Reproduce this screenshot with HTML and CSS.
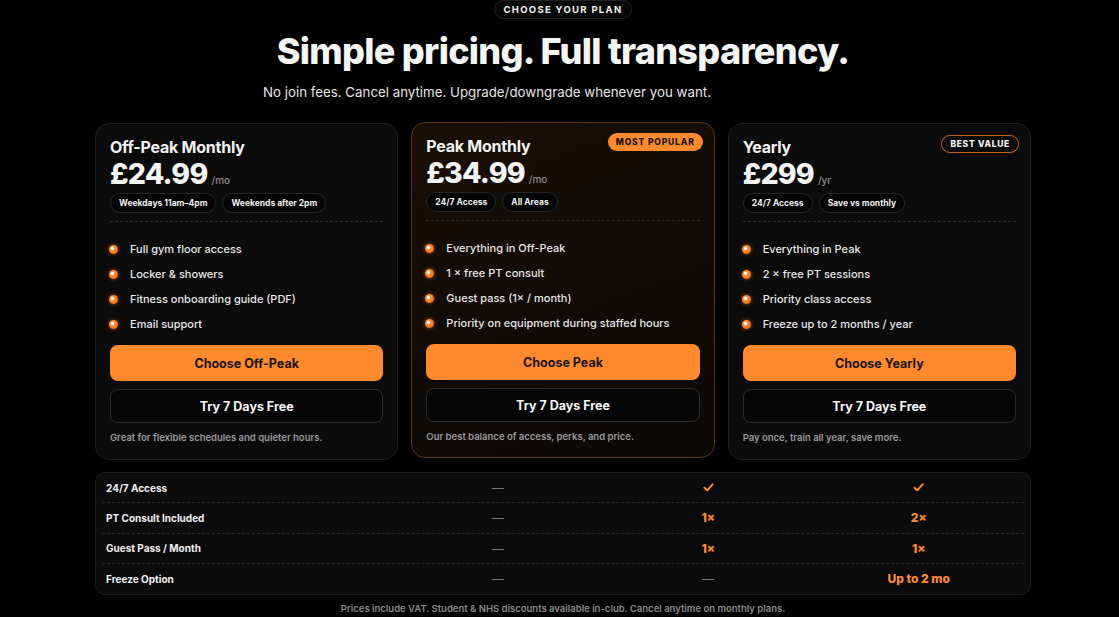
FILE: index.html
```html
<!DOCTYPE html>
<html lang="en">
<head>
<meta charset="utf-8">
<title>Pricing</title>
<link rel="stylesheet" href="styles.css">
</head>
<body>
<div class="shell">
  <main class="page">
    <header class="hero">
      <span class="eyebrow">CHOOSE YOUR PLAN</span>
      <h1 class="headline">Simple pricing. Full transparency.</h1>
      <p class="lede">No join fees. Cancel anytime. Upgrade/downgrade whenever you want.</p>
    </header>

    <section class="plans">
      <article class="plan">
        <h2 class="plan-name">Off-Peak Monthly</h2>
        <div class="price"><span class="amount">£24.99</span><span class="per">/mo</span></div>
        <div class="chips"><span class="chip">Weekdays 11am–4pm</span><span class="chip">Weekends after 2pm</span></div>
        <hr class="divider">
        <ul class="features">
          <li><span class="dot"></span>Full gym floor access</li>
          <li><span class="dot"></span>Locker &amp; showers</li>
          <li><span class="dot"></span>Fitness onboarding guide (PDF)</li>
          <li><span class="dot"></span>Email support</li>
        </ul>
        <button class="btn btn-primary">Choose Off-Peak</button>
        <button class="btn btn-ghost">Try 7 Days Free</button>
        <p class="note">Great for flexible schedules and quieter hours.</p>
      </article>

      <article class="plan plan-popular">
        <span class="badge badge-solid">MOST POPULAR</span>
        <h2 class="plan-name">Peak Monthly</h2>
        <div class="price"><span class="amount">£34.99</span><span class="per">/mo</span></div>
        <div class="chips"><span class="chip">24/7 Access</span><span class="chip">All Areas</span></div>
        <hr class="divider">
        <ul class="features">
          <li><span class="dot"></span>Everything in Off-Peak</li>
          <li><span class="dot"></span>1 × free PT consult</li>
          <li><span class="dot"></span>Guest pass (1× / month)</li>
          <li><span class="dot"></span>Priority on equipment during staffed hours</li>
        </ul>
        <button class="btn btn-primary">Choose Peak</button>
        <button class="btn btn-ghost">Try 7 Days Free</button>
        <p class="note">Our best balance of access, perks, and price.</p>
      </article>

      <article class="plan">
        <span class="badge badge-outline">BEST VALUE</span>
        <h2 class="plan-name">Yearly</h2>
        <div class="price"><span class="amount">£299</span><span class="per">/yr</span></div>
        <div class="chips"><span class="chip">24/7 Access</span><span class="chip">Save vs monthly</span></div>
        <hr class="divider">
        <ul class="features">
          <li><span class="dot"></span>Everything in Peak</li>
          <li><span class="dot"></span>2 × free PT sessions</li>
          <li><span class="dot"></span>Priority class access</li>
          <li><span class="dot"></span>Freeze up to 2 months / year</li>
        </ul>
        <button class="btn btn-primary">Choose Yearly</button>
        <button class="btn btn-ghost">Try 7 Days Free</button>
        <p class="note">Pay once, train all year, save more.</p>
      </article>
    </section>

    <section class="compare">
      <div class="row">
        <span class="label">24/7 Access</span>
        <span class="val muted">—</span>
        <span class="val"><svg class="check" viewBox="0 0 12 10" width="11" height="9"><path d="M1.5 5.2 L4.6 8.2 L10.5 1.5" fill="none" stroke="#ff8a2e" stroke-width="2.2" stroke-linecap="round" stroke-linejoin="round"/></svg></span>
        <span class="val"><svg class="check" viewBox="0 0 12 10" width="11" height="9"><path d="M1.5 5.2 L4.6 8.2 L10.5 1.5" fill="none" stroke="#ff8a2e" stroke-width="2.2" stroke-linecap="round" stroke-linejoin="round"/></svg></span>
      </div>
      <div class="row">
        <span class="label">PT Consult Included</span>
        <span class="val muted">—</span>
        <span class="val hot">1×</span>
        <span class="val hot">2×</span>
      </div>
      <div class="row">
        <span class="label">Guest Pass / Month</span>
        <span class="val muted">—</span>
        <span class="val hot">1×</span>
        <span class="val hot">1×</span>
      </div>
      <div class="row">
        <span class="label">Freeze Option</span>
        <span class="val muted">—</span>
        <span class="val muted">—</span>
        <span class="val hot">Up to 2 mo</span>
      </div>
    </section>

    <p class="fineprint">Prices include VAT. Student &amp; NHS discounts available in-club. Cancel anytime on monthly plans.</p>
  </main>
</div>
</body>
</html>
```

FILE: styles.css
```css
* { box-sizing: border-box; }

html, body {
  margin: 0;
  padding: 0;
  background: #000;
  color: #f2f2f2;
  font-family: Inter, "Noto Sans", "Liberation Sans", sans-serif;
}

.shell {
  padding-left: 7px;
}

.page {
  width: 936px;
  margin: 0 auto;
}

.hero {
  display: flex;
  flex-direction: column;
  align-items: center;
}

.eyebrow {
  display: inline-flex;
  align-items: center;
  height: 19px;
  padding: 0 9px;
  border: 1px solid #222;
  border-radius: 999px;
  background: #070707;
  font-size: 9.5px;
  font-weight: 700;
  letter-spacing: 1.3px;
  color: #f2f2f2;
}

.headline {
  margin: 12px 0 0;
  font-size: 36px;
  line-height: 40px;
  font-weight: 800;
  letter-spacing: -0.7px;
  color: #f5f5f5;
}

.lede {
  width: 600px;
  margin: 12px 0 0;
  font-size: 13.3px;
  line-height: 18px;
  color: #e6e6e6;
  text-align: left;
}

.plans {
  display: grid;
  grid-template-columns: repeat(3, 1fr);
  gap: 13px;
  margin-top: 22px;
}

.plan {
  position: relative;
  display: flex;
  flex-direction: column;
  padding: 13px 14px 14px;
  border: 1px solid #1e1e1e;
  border-radius: 14px;
  background: #0b0b0b;
}

.plan-popular {
  border-color: #5e3312;
  background: linear-gradient(160deg, #1a0f07 0%, #120b06 45%, #0c0806 100%);
  margin-top: -1px;
  margin-bottom: 2px;
}

.badge {
  position: absolute;
  top: 10px;
  right: 11px;
  display: inline-flex;
  align-items: center;
  height: 18px;
  padding: 0 8px;
  border-radius: 999px;
  font-size: 8.5px;
  font-weight: 800;
  letter-spacing: 0.85px;
}

.badge-solid {
  background: #ff8a2e;
  color: #1a1005;
}

.badge-outline {
  top: 11px;
  border: 1.5px solid #c9641c;
  color: #f5f5f5;
  background: #0b0b0b;
  letter-spacing: 0.7px;
}

.plan-name {
  margin: 0;
  font-size: 16px;
  line-height: 20px;
  font-weight: 700;
  letter-spacing: -0.25px;
  color: #f2f2f2;
}

.price {
  display: flex;
  align-items: baseline;
  gap: 4px;
  margin-top: 1px;
}

.amount {
  font-size: 28.5px;
  line-height: 32px;
  font-weight: 800;
  letter-spacing: -0.8px;
  color: #f4f4f4;
}

.per {
  font-size: 10px;
  color: #8c8c8c;
  font-weight: 500;
}

.chips {
  display: flex;
  gap: 6px;
  margin-top: 3px;
}

.chip {
  display: inline-flex;
  align-items: center;
  height: 20px;
  padding: 0 8px;
  border: 1px solid #262626;
  border-radius: 999px;
  background: #050505;
  font-size: 8.5px;
  font-weight: 700;
  color: #f0f0f0;
}

.divider {
  width: 100%;
  margin: 8px 0 0;
  border: 0;
  border-top: 1px dashed #2a2a2a;
}

.features {
  list-style: none;
  margin: 18px 0 0;
  padding: 0;
  display: flex;
  flex-direction: column;
  gap: 7px;
}

.features li {
  display: flex;
  align-items: center;
  gap: 12px;
  height: 18px;
  font-size: 11px;
  font-weight: 500;
  color: #e8e8e8;
}

.dot {
  flex: none;
  width: 9px;
  height: 9px;
  margin-left: -1px;
  border-radius: 50%;
  background: radial-gradient(circle at 38% 38%, #ffffff 0, #ffffff 1.2px, #ff8f33 2.2px, #f07316 70%, #c9560c 100%);
  box-shadow: 0 0 4px rgba(255, 120, 30, 0.55);
}

.btn {
  display: flex;
  align-items: center;
  justify-content: center;
  width: 100%;
  border-radius: 8px;
  font-family: inherit;
  font-weight: 700;
  cursor: pointer;
}

.btn-primary {
  height: 36px;
  margin-top: 12px;
  border: 0;
  background: #ff8a2e;
  color: #1c1208;
  font-size: 12.5px;
}

.btn-ghost {
  height: 34px;
  margin-top: 8px;
  border: 1px solid #2c2c2c;
  background: #050505;
  color: #f5f5f5;
  font-size: 12.5px;
}

.note {
  margin: 9px 0 0;
  font-size: 9.5px;
  line-height: 12px;
  font-weight: 600;
  color: #9a9a9a;
}

.compare {
  margin-top: 12px;
  padding: 0 6px;
  border: 1px solid #1c1c1c;
  border-radius: 10px;
  background: #0b0b0b;
}

.row {
  display: grid;
  grid-template-columns: 1.38fr 1fr 1fr 1fr;
  align-items: center;
  height: 30.25px;
  border-bottom: 1px dashed #262626;
}

.row:last-child {
  border-bottom: 0;
}

.label {
  padding-left: 4px;
  font-size: 10px;
  font-weight: 700;
  color: #f0f0f0;
}

.val {
  display: flex;
  justify-content: center;
  align-items: center;
  font-size: 12px;
  font-weight: 800;
}

.muted {
  color: #777;
  font-weight: 400;
}

.hot {
  color: #ff8a2e;
}

.fineprint {
  margin: 8px 0 0;
  text-align: center;
  font-size: 9.5px;
  font-weight: 600;
  color: #8a8a8a;
}
```
